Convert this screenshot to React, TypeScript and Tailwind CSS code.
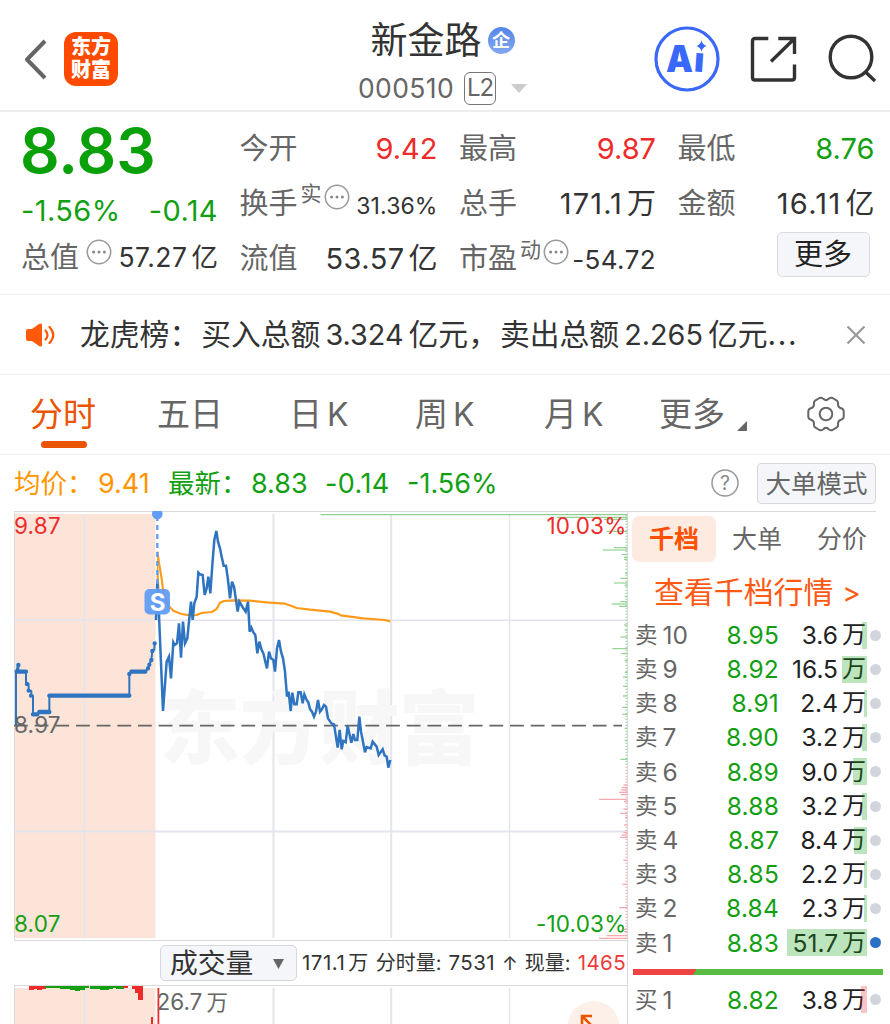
import type { ReactNode } from "react";

type Order = {
  side: string;
  level: number;
  price: string;
  volume: string;
  bar: number;
  active?: boolean;
};

const sellOrders: Order[] = [
  { side: "卖", level: 10, price: "8.95", volume: "3.6", bar: 5 },
  { side: "卖", level: 9, price: "8.92", volume: "16.5", bar: 25 },
  { side: "卖", level: 8, price: "8.91", volume: "2.4", bar: 3 },
  { side: "卖", level: 7, price: "8.90", volume: "3.2", bar: 5 },
  { side: "卖", level: 6, price: "8.89", volume: "9.0", bar: 14 },
  { side: "卖", level: 5, price: "8.88", volume: "3.2", bar: 5 },
  { side: "卖", level: 4, price: "8.87", volume: "8.4", bar: 13 },
  { side: "卖", level: 3, price: "8.85", volume: "2.2", bar: 3 },
  { side: "卖", level: 2, price: "8.84", volume: "2.3", bar: 3 },
  { side: "卖", level: 1, price: "8.83", volume: "51.7", bar: 80, active: true },
];

const buyOrders: Order[] = [{ side: "买", level: 1, price: "8.82", volume: "3.8", bar: 6 }];

// series points are in thirds of a pixel
const preMarket =
  "48,660 48,500 55,480 55,500 78,500 78,537 86,537 86,558 94,558 94,572 99,572 99,628 112,628 118,621 148,621 148,572 388,572 388,508 394,500 436,500 444,490 448,478 454,465 457,438 463,434 464,415";

const priceLine =
  "468,345 472,230 477,330 489,618 500,470 507,455 513,520 520,412 524,420 531,415 537,355 543,458 549,350 555,415 562,400 566,360 573,290 578,345 583,295 590,275 595,203 600,208 608,210 614,270 620,250 625,215 631,265 637,180 643,105 649,78 654,110 660,130 665,155 671,182 678,182 684,225 690,280 696,230 702,245 708,285 713,320 718,290 724,300 730,310 737,320 744,290 749,380 754,368 760,382 766,390 772,445 778,410 784,432 790,445 796,470 801,490 807,440 813,460 820,465 825,500 831,430 837,405 843,440 849,460 855,500 861,575 866,560 872,618 877,563 883,598 890,598 895,562 902,562 908,595 913,568 920,585 925,592 930,612 936,620 942,635 948,620 954,585 960,620 966,612 972,600 978,605 984,640 994,655 1002,658 1013,728 1019,675 1025,733 1030,708 1037,712 1043,662 1054,713 1060,687 1065,705 1072,705 1078,635 1083,680 1095,742 1100,726 1112,730 1118,710 1130,725 1136,750 1148,733 1154,752 1160,755 1165,788 1171,765";

const averageLine =
  "472,140 478,180 484,215 490,260 500,292 509,306 520,317 545,327 570,331 590,330 605,324 635,321 650,312 660,293 672,288 700,286 750,287 800,292 855,296 875,303 890,309 930,314 990,320 1010,325 1022,331 1090,340 1155,345 1171,349";

// [length, y] of the bars that hang on the right edge
const askTicks = [
  [920, 29], [212, 37], [70, 43], [62, 79], [40, 128], [74, 135], [17, 149], [10, 157], [10, 163],
  [7, 205], [21, 220], [40, 234], [8, 242], [8, 275], [21, 290], [47, 297], [25, 304], [10, 360],
  [8, 375], [21, 396], [45, 431], [18, 446], [8, 467], [8, 502], [13, 516], [13, 544], [13, 573],
  [15, 607], [15, 628], [8, 670], [8, 707], [21, 763],
];

const bidTicks = [
  [12, 840], [17, 848], [20, 855], [25, 862], [20, 869], [85, 883], [10, 890], [12, 912], [22, 925],
  [7, 937], [10, 960], [12, 982], [17, 990], [22, 997], [12, 1066], [15, 1138], [25, 1208], [10, 1273],
  [10, 1280], [62, 1292], [85, 1300],
];

const preVolume = [
  [29, 4, "r"], [33, 3, "r"], [37, 4, "r"], [41, 3, "r"], [45, 2, "g"], [50, 2, "g"], [55, 2, "g"],
  [60, 3, "g"], [65, 3, "g"], [70, 4, "g"], [75, 5, "g"], [80, 4, "g"], [84, 2, "g"], [90, 3, "g"],
  [95, 3, "g"], [100, 4, "g"], [104, 4, "g"], [108, 3, "g"], [112, 2, "g"], [116, 3, "g"], [119, 3, "g"],
  [123, 2, "r"], [132, 3, "r"], [135, 7, "r"], [138, 14, "r"],
] as const;

const Dots = () => (
  <svg viewBox="0 0 26 26" className="h-[26px] w-[26px] shrink-0">
    <circle cx="13" cy="13" r="11.7" fill="none" stroke="#999" strokeWidth="1.5" />
    <g fill="#888">
      <circle cx="7.6" cy="13" r="1.5" />
      <circle cx="13" cy="13" r="1.5" />
      <circle cx="18.4" cy="13" r="1.5" />
    </g>
  </svg>
);

const Stat = ({ label, children }: { label: ReactNode; children: ReactNode }) => (
  <div className="flex h-[55px] items-center justify-between whitespace-nowrap">
    <div className="-ml-px flex items-center text-[29px] text-[#666]">{label}</div>
    <div className="text-[29px] text-[#333]">{children}</div>
  </div>
);

const Unit = ({ children }: { children: ReactNode }) => <span className="ml-1 tracking-normal">{children}</span>;

const Header = () => (
  <header className="grid h-[112px] grid-cols-[240px_405px_245px] border-b-2 border-[#eee]">
    <div className="flex items-center pt-[7px] pl-[22px]">
      <svg viewBox="0 0 26 42" className="h-[42px] w-[26px]" fill="none" stroke="#666" strokeWidth="4">
        <path d="M23 3 5 21.5 23 40" strokeLinejoin="round" />
      </svg>
      <div className="ml-4 flex h-[54px] w-[54px] flex-col items-center justify-center rounded-[12px] bg-[#ff4a00] text-[20px] leading-[23px] font-black text-white">
        <span>东方</span>
        <span>财富</span>
      </div>
    </div>
    <div className="flex flex-col items-center">
      <div className="flex h-[44px] items-center pt-[37px] text-[37px] leading-[44px] text-[#333]">
        新金路
        <span className="ml-1.5 flex h-[27px] w-[27px] items-center justify-center rounded-full bg-gradient-to-b from-[#5585e8] to-[#83a8f0] text-[18px] leading-none font-bold text-white">
          企
        </span>
      </div>
      <div className="mt-[26px] flex h-[36px] items-center text-[26.5px] text-[#666]">
        <span className="tracking-[0.4px]">000510</span>
        <span className="ml-[10px] flex h-[33px] w-[32px] items-center justify-center rounded-[6px] border border-[#777] text-[24px] tracking-[-1px]">
          L2
        </span>
        <svg viewBox="0 0 16 9" className="ml-[15px] h-[9px] w-[16px]">
          <path d="M0 0h16L8 9z" fill="#ccc" />
        </svg>
      </div>
    </div>
    <div className="flex items-center pt-[8px] pl-[8px]">
      <svg viewBox="0 0 68 68" className="h-[68px] w-[68px]">
        <circle cx="34" cy="34" r="31" fill="none" stroke="#3a68fa" strokeWidth="3.2" />
        <g fill="#3a68fa" fontWeight="900">
          <text x="13" y="46.500" fontSize="37" textLength="27" lengthAdjust="spacingAndGlyphs">A</text>
          <text x="40.500" y="47" fontSize="34" transform="rotate(4 46 46)">ı</text>
        </g>
        <path d="M48.500 15.500q1.200 4.300 5.200 5.500q-4 1.200-5.200 5.500q-1.200-4.300-5.200-5.500q4-1.200 5.200-5.500z" fill="#3a68fa" />
      </svg>
      <svg viewBox="0 0 50 50" className="ml-[27px] h-[50px] w-[50px]" fill="none" stroke="#333" strokeWidth="3.400">
        <path d="M20.300 4.500H7q-2.500 0-2.500 2.500v36.500q0 2.500 2.500 2.500h37q2.500 0 2.500-2.500V30.500" />
        <path d="M30.300 4.500h16.200v15.500M46 5 23 27.500" />
      </svg>
      <svg viewBox="0 0 50 50" className="ml-[29px] h-[50px] w-[50px]" fill="none" stroke="#333" strokeWidth="3.400">
        <circle cx="24" cy="23" r="20.800" />
        <path d="m38 37.500 10 9.500" />
      </svg>
    </div>
  </header>
);

const Quote = () => (
  <section className="grid h-[183px] grid-cols-[196px_197px_196px_196px] gap-x-[22.5px] border-b border-[#eee] pt-[9px] pl-[22px]">
    <div>
      <div className="-ml-0.5 flex h-[60px] items-center text-[62px] font-semibold text-[#0aa00a]">8.83</div>
      <div className="-ml-px flex h-[49px] items-center justify-between pt-[9px] text-[29px] tracking-[0.4px] text-[#12a012]">
        <span>-1.56%</span>
        <span>-0.14</span>
      </div>
      <div className="-ml-px flex h-[55px] items-center text-[29px] text-[#666]">
        总值
        <span className="ml-[7px] pb-[12px]">
          <Dots />
        </span>
        <span className="ml-auto text-[26.5px] tracking-[0.5px] whitespace-nowrap text-[#333]">
          57.27<Unit>亿</Unit>
        </span>
      </div>
    </div>
    <div>
      <Stat label="今开">
        <span className="text-[#ee2b2b]">9.42</span>
      </Stat>
      <Stat
        label={
          <>
            换手<span className="pb-[20px] pl-[3px] text-[21px]">实</span>
            <span className="pb-[13px] pl-[2px]">
              <Dots />
            </span>
          </>
        }
      >
        <span className="inline-block pt-[6px] text-[23px] tracking-[0.1px]">31.36%</span>
      </Stat>
      <Stat label="流值">
        <span className="tracking-[0.4px]">
          53.57<Unit>亿</Unit>
        </span>
      </Stat>
    </div>
    <div>
      <Stat label="最高">
        <span className="text-[#ee2b2b]">9.87</span>
      </Stat>
      <Stat label="总手">
        <span className="tracking-[1.1px]">
          171.1<Unit>万</Unit>
        </span>
      </Stat>
      <Stat
        label={
          <>
            市盈<span className="pb-[19px] pl-[3px] text-[21px]">动</span>
            <span className="pb-[13px] pl-[2px]">
              <Dots />
            </span>
          </>
        }
      >
        <span className="text-[26px] tracking-[0.4px]">-54.72</span>
      </Stat>
    </div>
    <div>
      <Stat label="最低">
        <span className="text-[#12a012]">8.76</span>
      </Stat>
      <Stat label="金额">
        <span className="tracking-[1.3px]">
          16.11<Unit>亿</Unit>
        </span>
      </Stat>
      <div className="flex h-[55px] items-start justify-end pt-px pr-[5px]">
        <button className="h-[45px] w-[93px] rounded-[5px] border border-[#dcdcdf] bg-[#f5f6f9] text-[29px] leading-[44px] text-[#222]">
          更多
        </button>
      </div>
    </div>
  </section>
);

const Notice = () => (
  <section className="flex h-[80px] items-center border-b border-[#eee] pl-[25px] text-[29.8px] text-[#333]">
    <svg viewBox="0 0 30 24" className="h-[24px] w-[30px]">
      <path d="M1 8q0-2 2-2h4l7-5q3-1.500 3 1v20q0 2.500-3 1l-7-5H3q-2 0-2-2z" fill="#ff5a0a" />
      <path d="M20.500 7.500q4 4.500 0 9M24.500 4q7.500 8 0 16" fill="none" stroke="#ff5a0a" strokeWidth="2.200" strokeLinecap="round" />
    </svg>
    <p className="ml-[25px] whitespace-nowrap">
      龙虎榜：<span className="ml-[2px]">买入总额</span>
      <span className="mx-[5px] text-[28.8px]">3.324</span>亿元，<span className="ml-[2px]">卖出总额</span>
      <span className="mx-[5px] text-[28.8px]">2.265</span>亿元
      <span className="tracking-[1.6px]">...</span>
    </p>
    <svg viewBox="0 0 20 20" className="mr-[24px] ml-auto h-[20px] w-[20px]" stroke="#999" strokeWidth="2.200">
      <path d="m1.500 1.500 17 17M18.500 1.500l-17 17" />
    </svg>
  </section>
);

const Tabs = () => (
  <nav className="flex h-[80px] items-start border-b border-[#eee] pl-[30px] text-[33px] leading-[78px] text-[#666]">
    <div className="flex w-[127px] flex-col text-[#ea5504]">
      <span className="h-[66px]">分时</span>
      <span className="ml-[11px] h-[7px] w-[46px] rounded-full bg-[#ea5504]" />
    </div>
    <span className="w-[132px]">五日</span>
    <span className="w-[126px]">日<span className="ml-[5px] text-[32px]">K</span></span>
    <span className="w-[129px]">周<span className="ml-[5px] text-[32px]">K</span></span>
    <span className="w-[115px]">月<span className="ml-[5px] text-[32px]">K</span></span>
    <span className="w-[78px]">更多</span>
    <svg viewBox="0 0 10 10" className="mt-[46px] h-[10px] w-[10px]">
      <path d="M10 0v10H0z" fill="#666" />
    </svg>
    <svg viewBox="0 0 38 36" className="mt-[21px] ml-[60px] h-[36px] w-[38px]" fill="none" stroke="#666" strokeWidth="2">
      <path
        d="M12.500 2q2.500-1 4 1 2.500 2.200 5 0 1.500-2 4-1l4 2.300q2 1.200 1.500 4 0 3.200 3 4 2.700.700 2.700 3.200v5q0 2.500-2.700 3.200-3 .8-3 4 .5 2.800-1.500 4l-4 2.300q-2.500 1-4-1-2.500-2.200-5 0-1.500 2-4 1l-4-2.300q-2-1.200-1.500-4 0-3.200-3-4-2.700-.7-2.700-3.200v-5q0-2.500 2.700-3.200 3-.8 3-4-.5-2.800 1.500-4z"
        strokeLinejoin="round"
      />
      <circle cx="19" cy="18" r="6.300" />
    </svg>
  </nav>
);

const Summary = () => (
  <div className="flex h-[56px] items-center pl-[14px] text-[26.500px] whitespace-nowrap text-[#12a012]">
    <span className="w-[84px] text-[#ff9500]">均价：</span>
    <span className="w-[70px] text-[27px] text-[#ff9500]">9.41</span>
    <span className="w-[83px]">最新：</span>
    <span className="w-[74px] text-[27px]">8.83</span>
    <span className="w-[82px] text-[27px] tracking-[0.4px]">-0.14</span>
    <span className="text-[27px]">-1.56%</span>
    <svg viewBox="0 0 28 28" className="ml-auto h-[28px] w-[28px]">
      <circle cx="14" cy="14" r="13" fill="none" stroke="#999" strokeWidth="1.500" />
      <text x="14" y="21" textAnchor="middle" fontSize="19.500" fill="#888">?</text>
    </svg>
    <button className="mr-[14px] ml-[18px] h-[41px] w-[119px] rounded-[4px] border border-[#d8d8dc] bg-[#f5f6f9] text-[25.500px] leading-[39px] text-[#666]">
      大单模式
    </button>
  </div>
);

const PriceChart = () => (
  <svg viewBox="14 511 614 429" className="block h-[429px] w-[614px]">
    <rect x="14" y="514" width="141.500" height="424" fill="#fce4d8" />
    <g stroke="#e3e5ec" fill="none">
      <path d="M84.500 514V938M509.500 514V938M14 620.300H628" strokeWidth="1.400" />
      <path d="M273.500 514V938M391.200 514V938M14 831.500H628" strokeWidth="2" />
      <path d="M14 511.500H628M14.500 511V940M627.500 511V940" stroke="#d9dade" />
    </g>
    <text x="160" y="757" textLength="319" fontSize="80" fontWeight="900" fill="#f7f7f8">
      东方财富
    </text>
    <g transform="translate(0 505) scale(.33333)" strokeWidth="3.500">
      {askTicks.map(([len, y]) => (
        <path key={y} d={`M${1882 - len} ${y}H1882`} stroke="#8fd08f" />
      ))}
      {bidTicks.map(([len, y]) => (
        <path key={y} d={`M${1882 - len} ${y}H1882`} stroke="#f5a3a8" />
      ))}
      <path d="M1879 29V780" stroke="#8fd08f" strokeWidth="5" strokeDasharray="3 6" />
      <path d="M1879 785V1300" stroke="#f5a3a8" strokeWidth="5" strokeDasharray="3 6" />
    </g>
    <path d="M14 725.700H622" stroke="#666" strokeWidth="1.700" strokeDasharray="13.800 6.870" />
    <g transform="translate(0 505) scale(.33333)" fill="none" strokeLinejoin="round">
      <polyline points={averageLine} stroke="#ff9a1a" strokeWidth="6.500" />
      <path d="M467 335 472 140 479 260z" fill="#ff9a1a" />
      <polyline points={preMarket} stroke="#2f74c0" strokeWidth="6" />
      <path
        d="M50 500H78M99 628H112M118 621H148M148 572H388M394 500H436M55 480h.1M81 537h.1M86 557h.1M93 572h.1M388 507h.1M444 490h.1M448 479h.1M454 465h.1M457 438h.1M464 415h.1"
        stroke="#2f74c0"
        strokeWidth="13"
        strokeLinecap="round"
      />
      <polyline points={priceLine} stroke="#2f74c0" strokeWidth="7.500" strokeLinejoin="miter" />
    </g>
    <path d="M157.300 516V590" stroke="#5f9cf5" strokeWidth="2.300" strokeDasharray="5 4" />
    <circle cx="157.300" cy="514" r="5.300" fill="#5f9cf5" />
    <rect x="144.500" y="589" width="25.500" height="25.500" rx="5" fill="#5f9cf5" fillOpacity=".93" />
    <text x="157.500" y="610.500" textAnchor="middle" fontSize="24" fontWeight="700" fill="#fff">S</text>
    <g fontSize="22.500" letterSpacing=".2">
      <text x="14" y="533.500" fill="#ee2b2b">9.87</text>
      <text x="14" y="732.500" fill="#666">8.97</text>
      <text x="14" y="931.500" fill="#12a012">8.07</text>
      <text x="626.500" y="533.500" fill="#ee2b2b" textAnchor="end">10.03%</text>
      <text x="626.500" y="931.500" fill="#12a012" textAnchor="end">-10.03%</text>
    </g>
  </svg>
);

const VolumeBar = () => (
  <div className="flex h-[46px] items-center border-y border-r border-[#d9dade] text-[20.5px] whitespace-nowrap text-[#333]">
    <button className="ml-[146px] flex h-[36px] w-[137px] shrink-0 items-center rounded-[5px] border border-[#d8d8dc] bg-[#f5f6f9] pt-px pl-[9px] text-[27.800px]">
      成交量
      <svg viewBox="0 0 11 10" className="ml-[20px] h-[10px] w-[11px]">
        <path d="M0 0h11L5.500 10z" fill="#666" />
      </svg>
    </button>
    <span className="ml-[5px] tracking-[0.5px]">171.1<span className="ml-[3px] text-[20px]">万</span></span>
    <span className="ml-[7px] text-[20px]">分时量:</span>
    <span className="ml-[7px] tracking-[0.4px]">7531</span>
    <span className="mx-[7px] text-[19px]">↑</span>
    <span className="text-[20px]">现量:</span>
    <span className="ml-auto pr-[1px] tracking-[0.4px] text-[#ee3b3b]">1465</span>
  </div>
);

const VolumeChart = () => (
  <svg viewBox="14 986 614 38" className="block h-[38px] w-[614px]">
    <rect x="14" y="988" width="141.500" height="36" fill="#fce4d8" />
    <path d="M84.500 988V1024M509.500 988V1024" stroke="#e3e5ec" strokeWidth="1.400" />
    <path d="M273.500 988V1024M391.200 988V1024" stroke="#e3e5ec" strokeWidth="2" />
    <path d="M14.500 986V1024M627.500 986V1024" stroke="#d9dade" />
    {preVolume.map(([x, h, tone]) => (
      <rect key={x} x={x} y="986" width="5" height={h} fill={tone === "r" ? "#ee2b2b" : "#12a012"} />
    ))}
    <rect x="151" y="1017" width="2" height="7" fill="#ee2b2b" />
    <rect x="157.500" y="988" width="1.800" height="36" fill="#ee2b2b" />
    <g fill="#666">
      <text x="156.500" y="1009.500" fontSize="22.500">26.7</text>
      <text x="206.500" y="1010" fontSize="21.500">万</text>
    </g>
    <circle cx="593.500" cy="1027" r="26" fill="#fdf0e8" />
    <path d="M582 1027V1016H592M582.500 1016.500 596 1030" fill="none" stroke="#ea5504" strokeWidth="2.600" />
  </svg>
);

const OrderRow = ({ order }: { order: Order }) => {
  const isSell = order.side === "卖";
  return (
    <div className="flex h-[34.2px] items-center pl-[7px] text-[24.5px] text-[#222]">
      <span className="flex w-[70px] items-center text-[#666]">
        <span className="text-[22.500px]">{order.side}</span>
        <span className="ml-[5px]">{order.level}</span>
      </span>
      <span className="w-[74px] text-right tracking-[0.2px] text-[#12a012]">{order.price}</span>
      <span className="relative flex h-[27px] w-[88px] items-center justify-end pr-[1px]">
        <span
          className={`absolute top-0 right-0 h-full ${isSell ? "bg-[#12a012]/28" : "bg-[#ee2b2b]/28"}`}
          style={{ width: order.bar }}
        />
        {order.volume}
        <span className="ml-[4px] text-[24px]">万</span>
      </span>
      <span className={`ml-[3px] h-[11px] w-[11px] rounded-full ${order.active ? "bg-[#2a6fc4]" : "bg-[#d3d5dd]"}`} />
    </div>
  );
};

const OrderBook = () => (
  <aside className="h-[513px] w-[262px] overflow-hidden">
    <div className="mr-[14px] flex items-center border-t border-[#d9dade] pt-[4px] pl-[4px] text-[25px] text-[#666]">
      <span className="flex h-[46px] w-[84px] items-center justify-center rounded-[7px] bg-[#fdebe2] font-bold text-[#ff5000]">
        千档
      </span>
      <span className="ml-[16px]">大单</span>
      <span className="ml-[35px] whitespace-nowrap">分价</span>
    </div>
    <div className="flex h-[56px] items-center pt-[6px] pl-[26px] text-[29.900px] whitespace-nowrap text-[#ff5a14]">
      查看千档行情<span className="ml-[9px] text-[28px]">&gt;</span>
    </div>
    {sellOrders.map((order) => (
      <OrderRow key={order.level} order={order} />
    ))}
    <div className="mt-[9px] mb-[8px] ml-[5px] h-[6px] w-[250px] bg-[linear-gradient(120deg,#ee4444_25%,#5aba41_25%)]" />
    {buyOrders.map((order) => (
      <OrderRow key={order.level} order={order} />
    ))}
  </aside>
);

const App = () => (
  <div className="h-[1024px] w-[890px] overflow-hidden bg-white font-[Inter,'Noto_Sans_CJK_SC',sans-serif] leading-none">
    <Header />
    <Quote />
    <Notice />
    <Tabs />
    <Summary />
    <main className="flex pl-[14px]">
      <div className="w-[614px] shrink-0">
        <PriceChart />
        <VolumeBar />
        <VolumeChart />
      </div>
      <OrderBook />
    </main>
  </div>
);

export default App;
